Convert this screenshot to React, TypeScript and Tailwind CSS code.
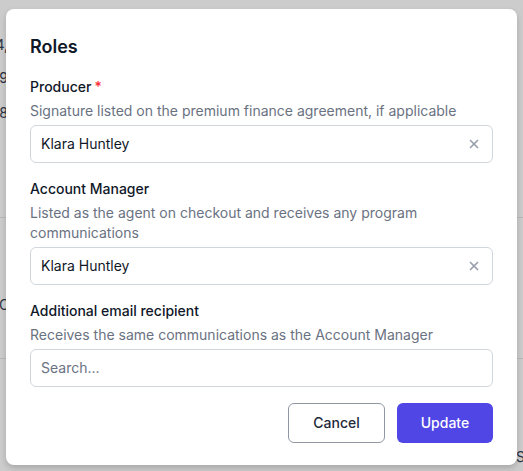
import { X } from "lucide-react";

type FieldProps = {
  label: string;
  required?: boolean;
  hint: string;
  value?: string;
  placeholder?: string;
};

const Field = ({ label, required, hint, value, placeholder }: FieldProps) => {
  return (
    <div className="flex flex-col gap-1">
      <label className="text-sm font-medium leading-5 text-gray-900">
        {label}
        {required && <span className="ml-[3px] text-red-500">*</span>}
      </label>
      <p className="text-sm leading-5 text-gray-500">{hint}</p>
      <div className="flex h-[38px] items-center rounded-md border border-gray-300 bg-white pl-[10px] pr-[11px]">
        <input
          readOnly
          value={value ?? ""}
          placeholder={placeholder}
          className="flex-1 bg-transparent text-sm text-gray-900 outline-none placeholder:text-gray-500"
        />
        {value && <X className="h-[14px] w-[14px] text-gray-400" strokeWidth={3} />}
      </div>
    </div>
  );
};

const EdgeText = ({ text, className }: { text: string; className: string }) => (
  <div className={`flex w-[8px] justify-end overflow-hidden whitespace-nowrap ${className}`}>
    {text}
  </div>
);

const App = () => {
  return (
    <div className="relative h-[471px] w-[523px] overflow-hidden bg-white font-['Inter',sans-serif] text-sm">
      {/* table rows behind the dialog */}
      <div className="flex h-full flex-col pt-[35px] text-gray-700">
        <EdgeText text="$14," className="h-[33px]" />
        <EdgeText text="$29" className="h-[35px]" />
        <EdgeText text="$38" className="h-[114px]" />
        <div className="h-[1px] w-full bg-gray-200" />
        <div className="h-[77px]" />
        <div className="h-[63px] -ml-[1px] whitespace-nowrap">CA</div>
        <div className="h-[1px] w-full bg-gray-200" />
        <div className="flex flex-1 items-end justify-end pb-[4px]">
          <span className="-mr-[2px]">.S</span>
        </div>
      </div>

      <div className="absolute inset-0 flex items-start justify-center bg-black/20 pt-[9px]">
        <div className="flex w-[511px] flex-col rounded-lg bg-white px-6 pb-[22px] pt-6 shadow-[0_3px_6px_rgba(0,0,0,0.18)]">
          <h2 className="text-lg font-semibold leading-7 text-gray-900">Roles</h2>

          <div className="mt-4 flex flex-col gap-4">
            <Field
              label="Producer"
              required
              hint="Signature listed on the premium finance agreement, if applicable"
              value="Klara Huntley"
            />
            <Field
              label="Account Manager"
              hint="Listed as the agent on checkout and receives any program communications"
              value="Klara Huntley"
            />
            <Field
              label="Additional email recipient"
              hint="Receives the same communications as the Account Manager"
              placeholder="Search..."
            />
          </div>

          <div className="mt-4 flex justify-end gap-3">
            <button className="h-10 w-[97px] rounded-md border border-[#9097a3] bg-white text-sm font-medium text-gray-800">
              Cancel
            </button>
            <button className="h-10 w-[96px] rounded-md bg-[#4f46e5] text-sm font-medium text-white">
              Update
            </button>
          </div>
        </div>
      </div>
    </div>
  );
};

export default App;
